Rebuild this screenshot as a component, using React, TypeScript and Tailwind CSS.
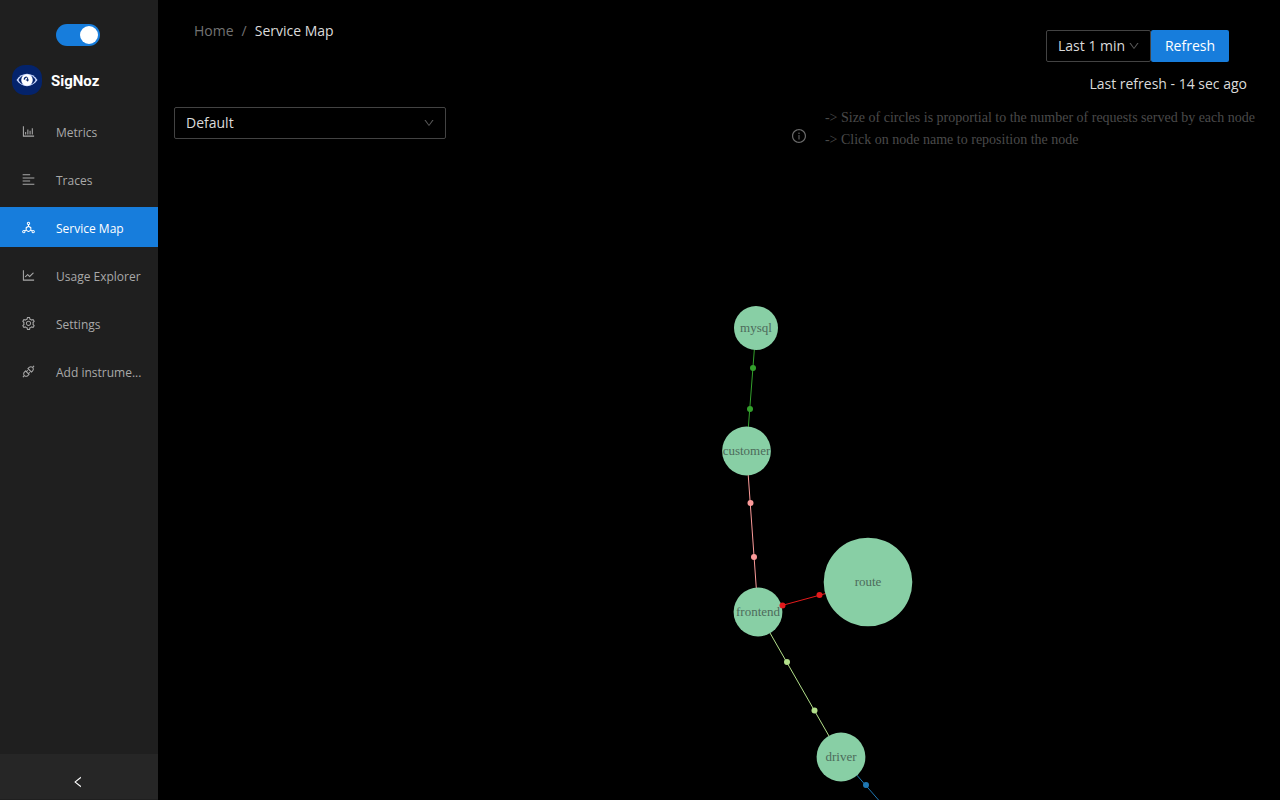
import { useState } from "react";
import {
  AiOutlineAlignLeft,
  AiOutlineApi,
  AiOutlineBarChart,
  AiOutlineDeploymentUnit,
  AiOutlineDown,
  AiOutlineInfoCircle,
  AiOutlineLeft,
  AiOutlineLineChart,
  AiOutlineSetting,
} from "react-icons/ai";

const menu = [
  { label: "Metrics", icon: AiOutlineBarChart },
  { label: "Traces", icon: AiOutlineAlignLeft },
  { label: "Service Map", icon: AiOutlineDeploymentUnit },
  { label: "Usage Explorer", icon: AiOutlineLineChart },
  { label: "Settings", icon: AiOutlineSetting },
  { label: "Add instrume...", icon: AiOutlineApi },
];

const nodes = [
  { id: "mysql", x: 598, y: 172, r: 22 },
  { id: "customer", x: 588.5, y: 295, r: 24.4 },
  { id: "frontend", x: 600, y: 456, r: 24.4 },
  { id: "route", x: 710, y: 426, r: 44.3 },
  { id: "driver", x: 683, y: 601, r: 24.4 },
];

const links = [
  { color: "#33a02c", x1: 598, y1: 172, x2: 588.5, y2: 295, dots: [[595, 212], [592, 253]] },
  { color: "#fb9a99", x1: 588.5, y1: 295, x2: 600, y2: 456, dots: [[592.5, 347], [596, 401]] },
  { color: "#e31a1c", x1: 600, y1: 456, x2: 710, y2: 426, dots: [[624.5, 449.5], [661.5, 439]] },
  { color: "#b2df8a", x1: 600, y1: 456, x2: 683, y2: 601, dots: [[629, 506], [656.5, 554.5]] },
  { color: "#1f78b4", x1: 683, y1: 601, x2: 738, y2: 664, dots: [[708, 629]] },
];

function Logo() {
  return (
    <svg className="size-8 shrink-0" viewBox="0 0 32 32" aria-hidden="true">
      <rect x="1" y="1" width="30" height="30" rx="13" fill="#04236b" />
      <path d="M5.500 16C11 7.800 21 7.800 26.500 16C21 24.200 11 24.200 5.500 16Z" fill="#c9d8ff" />
      <path d="M7.500 16C8.500 14 10 12.500 12 11.500C9.800 14 9.800 18 12 20.500C10 19.500 8.500 18 7.500 16Z" fill="#04236b" />
      <path d="M24.500 16C23.500 14 22 12.500 20 11.500C22.200 14 22.200 18 20 20.500C22 19.500 23.500 18 24.500 16Z" fill="#04236b" />
      <circle cx="16" cy="16" r="5.500" fill="#fff" />
      <path d="M13.200 15.600C13.300 14 14.300 13.200 15.800 13.100" stroke="#04236b" strokeWidth="1.200" fill="none" />
      <path d="M16.600 13.400v4M14.800 16h3" stroke="#04236b" strokeWidth="1" fill="none" />
    </svg>
  );
}

function Sidebar() {
  const [dark, setDark] = useState(true);
  return (
    <aside className="flex w-[158px] shrink-0 flex-col bg-[#1f1f1f]">
      <div className="flex justify-center pt-6 pr-0.5">
        <label className="relative block h-[22px] w-11 cursor-pointer">
          <input
            type="checkbox"
            role="switch"
            aria-label="Dark theme"
            checked={dark}
            onChange={() => setDark(!dark)}
            className="peer block h-full w-full appearance-none rounded-full bg-[#434343] checked:bg-[#177ddc]"
          />
          <span className="pointer-events-none absolute top-0.5 left-0.5 size-[18px] rounded-full bg-white peer-checked:left-6" />
        </label>
      </div>
      <a href="#home" className="mt-[18px] flex items-center gap-2 pl-[11px]">
        <Logo />
        <span className="pt-0.5 font-[Roboto,sans-serif] text-[15px] font-bold text-white">SigNoz</span>
      </a>
      <nav className="mt-[15px] flex flex-col gap-2">
        {menu.map(({ label, icon: Icon }) => {
          const active = label === "Service Map";
          return (
            <a
              key={label}
              href="#menu"
              aria-current={active ? "page" : undefined}
              className={
                active
                  ? "flex h-10 items-center gap-5 bg-[#177ddc] pl-[21px] text-white"
                  : "flex h-10 items-center gap-5 pl-[21px] text-[#a9a9a9]"
              }
            >
              <Icon className="size-[15px] shrink-0" />
              <span className="pt-[3px] text-xs whitespace-nowrap">{label}</span>
            </a>
          );
        })}
      </nav>
      <button
        type="button"
        aria-label="Collapse sidebar"
        className="mt-auto mb-px flex h-[45px] items-center justify-center bg-[#262626] pt-2.5 pr-0.5 text-white"
      >
        <AiOutlineLeft className="size-[14px]" />
      </button>
    </aside>
  );
}

function Header() {
  return (
    <header className="flex justify-between pt-5 pr-[33px] pl-9">
      <nav aria-label="Breadcrumb" className="flex h-[22px] items-center gap-2 text-sm text-[#737373]">
        <a href="#home">Home</a>
        <span>/</span>
        <span className="text-[#dbdbdb]">Service Map</span>
      </nav>
      <div className="flex flex-col items-end pt-[10px]">
        <div className="mr-[18px] flex">
          <div className="relative">
            <select
              aria-label="Time range"
              className="h-8 w-[105px] appearance-none rounded-xs border border-[#434343] bg-black pl-[11px] text-sm text-[#dbdbdb]"
            >
              <option>Last 1 min</option>
            </select>
            <AiOutlineDown className="pointer-events-none absolute top-[10px] right-[11px] size-3 text-[#5a5a5a]" />
          </div>
          <button type="button" className="h-8 w-[78px] rounded-xs bg-[#177ddc] text-sm text-white">
            Refresh
          </button>
        </div>
        <p className="mt-[11px] text-sm leading-[22px] text-[#dbdbdb]">Last refresh - 14 sec ago</p>
      </div>
    </header>
  );
}

function Toolbar() {
  return (
    <div className="mt-3 flex items-start justify-between pr-[25px] pl-4">
      <div className="relative">
        <select
          aria-label="Service"
          className="h-8 w-[272px] appearance-none rounded-xs border border-[#434343] bg-black pl-[11px] text-sm text-[#dbdbdb]"
        >
          <option>Default</option>
        </select>
        <AiOutlineDown className="pointer-events-none absolute top-[10px] right-[11px] size-3 text-[#5a5a5a]" />
      </div>
      <div className="flex items-center gap-[18px] font-['Liberation_Serif',serif] text-sm leading-[22px] text-[#4a4a4a]">
        <AiOutlineInfoCircle className="mt-3.5 size-4 text-[#6a6a6a]" />
        <div>
          <p>-&gt; Size of circles is proportial to the number of requests served by each node</p>
          <p>-&gt; Click on node name to reposition the node</p>
        </div>
      </div>
    </div>
  );
}

function ServiceGraph() {
  return (
    <svg className="mt-[5px] min-h-[644px] w-full flex-1" role="img" aria-label="Service map">
      {links.map((l) => (
        <line key={l.color} x1={l.x1} y1={l.y1} x2={l.x2} y2={l.y2} stroke={l.color} strokeWidth="1" />
      ))}
      {nodes.map((n) => (
        <circle key={n.id} cx={n.x} cy={n.y} r={n.r} fill="#88cfa5" />
      ))}
      {links.map((l) =>
        l.dots.map(([x, y]) => <circle key={`${x}-${y}`} cx={x} cy={y} r="3" fill={l.color} />)
      )}
      {nodes.map((n) => (
        <text
          key={n.id}
          x={n.x}
          y={n.y + 1}
          textAnchor="middle"
          dominantBaseline="middle"
          className="fill-[#4d6b5b] font-['Liberation_Serif',serif] text-[13px]"
        >
          {n.id}
        </text>
      ))}
    </svg>
  );
}

export default function App() {
  return (
    <div className="flex min-h-screen bg-black font-['Open_Sans','Noto_Sans',sans-serif]">
      <Sidebar />
      <main className="flex min-w-0 flex-1 flex-col">
        <Header />
        <Toolbar />
        <ServiceGraph />
      </main>
    </div>
  );
}
